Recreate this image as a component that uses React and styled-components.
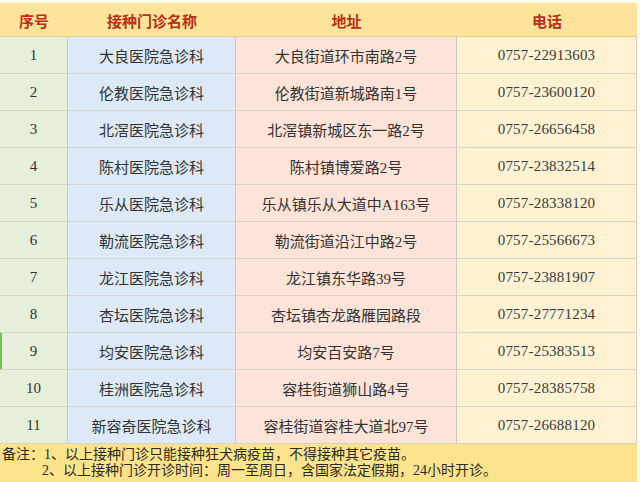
import React from 'react';
import styled, {createGlobalStyle} from 'styled-components';

const rows = [
    ['1', '大良医院急诊科', '大良街道环市南路2号', '0757-22913603'],
    ['2', '伦教医院急诊科', '伦教街道新城路南1号', '0757-23600120'],
    ['3', '北滘医院急诊科', '北滘镇新城区东一路2号', '0757-26656458'],
    ['4', '陈村医院急诊科', '陈村镇博爱路2号', '0757-23832514'],
    ['5', '乐从医院急诊科', '乐从镇乐从大道中A163号', '0757-28338120'],
    ['6', '勒流医院急诊科', '勒流街道沿江中路2号', '0757-25566673'],
    ['7', '龙江医院急诊科', '龙江镇东华路39号', '0757-23881907'],
    ['8', '杏坛医院急诊科', '杏坛镇杏龙路雁园路段', '0757-27771234'],
    ['9', '均安医院急诊科', '均安百安路7号', '0757-25383513'],
    ['10', '桂洲医院急诊科', '容桂街道狮山路4号', '0757-28385758'],
    ['11', '新容奇医院急诊科', '容桂街道容桂大道北97号', '0757-26688120'],
];

const heads = ['序号', '接种门诊名称', '地址', '电话'];
const colBg = ['#e5efd9', '#dde9f6', '#fde3d8', '#fff2d3'];

const Global = createGlobalStyle`
    body{
        margin:0;
        background:#fbfaf6;
        font-family:"Liberation Serif","Noto Sans CJK SC",serif;
    }
`;

const Page = styled.div`
    width:640px;
    height:482px;
    overflow:hidden;
    padding-top:3px;
    box-sizing:border-box;
    background:#fffbea;
`;

const Sheet = styled.div`
    width:637px;
    display:grid;
    grid-template-columns:68px 168px 221px 180px;
    grid-template-rows:34px repeat(11, 37px) auto;
`;

const HeadCell = styled.div`
    background:#fde49a;
    color:#b8301a;
    font-family:"Noto Sans CJK SC",sans-serif;
    font-weight:700;
    font-size:15px;
    display:flex;
    align-items:center;
    justify-content:center;
    border-bottom:1px solid #e8cf86;
    padding-top:1px;
`;

const Cell = styled.div`
    background:${p => p.$bg};
    color:#333;
    font-size:15px;
    display:flex;
    align-items:center;
    justify-content:center;
    border-bottom:1px solid #d6d3cc;
    border-right:1px solid ${p => p.$last ? '#d9d2c0' : '#c9c9c9'};
    box-shadow:${p => p.$mark ? 'inset 2px 0 0 #6fbf4a' : 'none'};
    padding-top:1px;
`;

const Phone = styled.span`
    letter-spacing:0.2px;
    color:#3a3a3a;
`;

const Note = styled.div`
    grid-column:1 / -1;
    background:#fde38b;
    color:#2d2a22;
    font-size:14px;
    line-height:16px;
    padding:3px 0 0 2px;
    height:38px;
    box-sizing:border-box;
    white-space:nowrap;
`;

const NoteLine = styled.div`
    padding-left:${p => p.$indent || 0}px;
`;

const App = () => {
    return (
        <Page>
            <Global/>
            <Sheet>
                {heads.map(h => <HeadCell key={h}>{h}</HeadCell>)}
                {rows.map(r => r.map((v, i) => (
                    <Cell key={r[0] + '-' + i} $bg={colBg[i]} $last={i === 3} $mark={i === 0 && r[0] === '9'}>
                        {i === 3 ? <Phone>{v}</Phone> : v}
                    </Cell>
                )))}
                <Note>
                    <NoteLine>备注：1、以上接种门诊只能接种狂犬病疫苗，不得接种其它疫苗。</NoteLine>
                    <NoteLine $indent={40}>2、以上接种门诊开诊时间：周一至周日，含国家法定假期，24小时开诊。</NoteLine>
                </Note>
            </Sheet>
        </Page>
    );
};

export default App;
